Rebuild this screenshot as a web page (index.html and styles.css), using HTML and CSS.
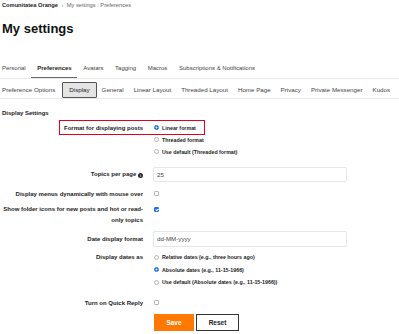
FILE: index.html
```html
<!DOCTYPE html>
<html lang="ro">
<head>
<meta charset="utf-8">
<title>My settings</title>
<link rel="stylesheet" href="styles.css">
</head>
<body>
<div class="page">
  <nav class="crumbs"><b>Comunitatea Orange</b><span class="sep">›</span><span>My settings : Preferences</span></nav>
  <h1 class="title">My settings</h1>
  <ul class="tabs">
    <li>Personal</li>
    <li class="active">Preferences</li>
    <li>Avatars</li>
    <li>Tagging</li>
    <li>Macros</li>
    <li>Subscriptions &amp; Notifications</li>
  </ul>
  <ul class="subtabs">
    <li>Preference Options</li>
    <li class="active">Display</li>
    <li>General</li>
    <li>Linear Layout</li>
    <li>Threaded Layout</li>
    <li>Home Page</li>
    <li>Privacy</li>
    <li>Private Messenger</li>
    <li>Kudos</li>
  </ul>
  <h2 class="section">Display Settings</h2>
  <form class="form">
    <div class="row r-format">
      <div class="label">Format for displaying posts</div>
      <div class="radios">
        <label class="opt"><input type="radio" name="fmt" checked>Linear format</label>
        <label class="opt"><input type="radio" name="fmt">Threaded format</label>
        <label class="opt"><input type="radio" name="fmt">Use default (Threaded format)</label>
      </div>
      <div class="highlight"></div>
    </div>
    <div class="row r-topics">
      <div class="label">Topics per page <span class="info">i</span></div>
      <div class="ctl"><input class="text" type="text" value="25"></div>
    </div>
    <div class="row r-menus">
      <div class="label">Display menus dynamically with mouse over</div>
      <div class="ctl"><input class="check" type="checkbox"></div>
    </div>
    <div class="row r-folder">
      <div class="label">Show folder icons for new posts and hot or read-only topics</div>
      <div class="ctl"><input class="check" type="checkbox" checked></div>
    </div>
    <div class="row r-date">
      <div class="label">Date display format</div>
      <div class="ctl"><input class="text" type="text" value="dd-MM-yyyy"></div>
    </div>
    <div class="row r-dates">
      <div class="label">Display dates as</div>
      <div class="radios">
        <label class="opt"><input type="radio" name="dates">Relative dates (e.g., three hours ago)</label>
        <label class="opt"><input type="radio" name="dates" checked>Absolute dates (e.g., 11-15-1966)</label>
        <label class="opt"><input type="radio" name="dates">Use default (Absolute dates (e.g., 11-15-1966))</label>
      </div>
    </div>
    <div class="row r-quick">
      <div class="label">Turn on Quick Reply</div>
      <div class="ctl"><input class="check" type="checkbox"></div>
    </div>
    <div class="row r-buttons">
      <div></div>
      <div class="buttons">
        <button type="button" class="btn save">Save</button>
        <button type="button" class="btn reset">Reset</button>
      </div>
    </div>
  </form>
</div>
</body>
</html>
```
FILE: styles.css
```css
* { box-sizing: border-box; }
html, body { margin: 0; padding: 0; background: #fff; }
body {
  font-family: "Liberation Sans", Arial, sans-serif;
  color: #333;
  width: 399px;
  height: 334px;
  overflow: hidden;
}
.page { padding: 0; }

.crumbs {
  font-size: 5.7px;
  line-height: 11px;
  padding-left: 2px;
  color: #666;
  display: flex;
  gap: 3.5px;
}
.crumbs b { color: #222; }
.crumbs .sep { color: #888; }

.title {
  margin: 9.5px 0 0 2px;
  font-size: 13px;
  line-height: 16px;
  font-weight: bold;
  color: #111;
}

.tabs, .subtabs {
  list-style: none;
  margin: 0;
  padding: 0;
  display: flex;
  border-bottom: 1px solid #e9e9e9;
  color: #444;
  white-space: nowrap;
}
.tabs li, .subtabs li { flex: none; }
.tabs {
  margin-top: 27.5px;
  font-size: 6px;
}
.tabs li {
  padding: 0 5.8px 5px;
  line-height: 8px;
  border-bottom: 1.5px solid transparent;
  margin-bottom: -0.5px;
}
.tabs li:first-child { padding-left: 2px; }
.tabs li.active {
  font-weight: bold;
  color: #222;
  border-bottom-color: #6a6a6a;
}

.subtabs {
  margin-top: 3.5px;
  align-items: center;
  font-size: 6.2px;
}
.subtabs li {
  padding: 0 5px;
  line-height: 16px;
  height: 16px;
}
.subtabs li:first-child { padding-left: 2px; }
.subtabs li.active {
  background: #e4e4e4;
  border: 1px solid #555;
  border-radius: 1px;
  line-height: 14px;
  padding: 0 6px;
  margin-left: 2px;
  color: #222;
}

.section {
  margin: 9px 0 0 2px;
  font-size: 6px;
  line-height: 10px;
  font-weight: bold;
  color: #222;
}

.form { display: flex; flex-direction: column; }
.row {
  position: relative;
  display: grid;
  grid-template-columns: 141px 194px;
  column-gap: 10px;
  align-items: start;
  padding-left: 2px;
}
.label {
  text-align: right;
  font-size: 6px;
  font-weight: bold;
  color: #222;
  line-height: 10px;
}
.radios { display: flex; flex-direction: column; }
.opt {
  display: flex;
  align-items: center;
  gap: 3px;
  font-size: 5.3px;
  font-weight: bold;
  color: #222;
  height: 12px;
  white-space: nowrap;
}
.opt input {
  appearance: none;
  -webkit-appearance: none;
  margin: 0 0 0 1px;
  width: 5px;
  height: 5px;
  border-radius: 50%;
  border: 0.8px solid #b5b5b5;
  background: #fff;
  flex: none;
}
.opt input:checked {
  border-color: #1a73e8;
  background: radial-gradient(circle, #fff 0 0.8px, #1a73e8 1.1px);
}

.r-format { margin-top: 3.5px; }
.r-format .label { line-height: 12px; }
.highlight {
  position: absolute;
  left: 59px;
  top: -2px;
  width: 146px;
  height: 15px;
  border: 1.5px solid #e3001b;
  pointer-events: none;
}

.text {
  display: block;
  width: 194px;
  height: 15px;
  margin: 0;
  border: 1px solid #e6e6e6;
  border-radius: 2px;
  padding: 0 3px;
  font-family: "Liberation Sans", Arial, sans-serif;
  font-size: 6.2px;
  color: #444;
  background: #fff;
  outline: none;
}
.r-topics { margin-top: 9.5px; }
.r-topics .label { line-height: 15px; }
.info {
  display: inline-block;
  width: 5px;
  height: 5px;
  border-radius: 50%;
  background: #222;
  color: #fff;
  font-size: 4px;
  line-height: 5px;
  text-align: center;
  vertical-align: -0.5px;
}

.check {
  appearance: none;
  -webkit-appearance: none;
  display: block;
  margin: 2.5px 0 0 1px;
  width: 5px;
  height: 5px;
  border: 0.8px solid #b5b5b5;
  border-radius: 1px;
  background: #fff;
}
.check:checked {
  border-color: #1a73e8;
  background: #1a73e8;
  position: relative;
}
.check:checked::after {
  content: "";
  position: absolute;
  left: 1.2px;
  top: 0.2px;
  width: 1.2px;
  height: 2.4px;
  border: solid #fff;
  border-width: 0 0.8px 0.8px 0;
  transform: rotate(45deg);
}

.r-menus { margin-top: 6.5px; }
.r-folder { margin-top: 5.5px; }
.r-folder .label { line-height: 10.5px; }
.r-date { margin-top: 5.5px; }
.r-date .text { height: 16px; }
.r-date .label { line-height: 16px; }
.r-dates { margin-top: 4.5px; }
.r-dates .label { line-height: 12px; }
.r-dates .opt { height: 12.6px; }
.r-quick { margin-top: 9px; }
.r-buttons { margin-top: 6.5px; }

.buttons { display: flex; gap: 2px; margin-left: 1px; }
.btn {
  margin: 0;
  height: 17px;
  font-family: "Liberation Sans", Arial, sans-serif;
  font-size: 6.5px;
  font-weight: bold;
  border-radius: 0;
  cursor: pointer;
}
.save {
  width: 40px;
  background: #ff7900;
  color: #fff;
  border: 1px solid #ff7900;
}
.reset {
  width: 43px;
  background: #fff;
  color: #222;
  border: 1px solid #333;
}
```
